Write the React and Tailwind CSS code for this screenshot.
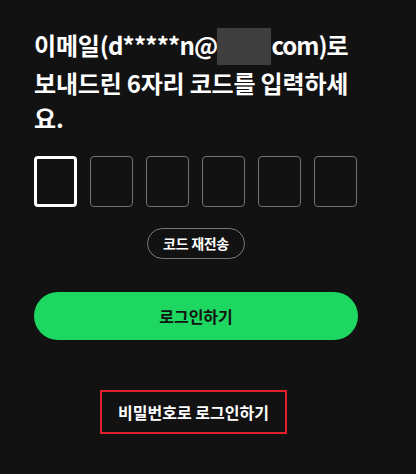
export default function App() {
  const font = { fontFamily: '"Noto Sans CJK KR", "Noto Sans", sans-serif' };
  return (
    <div className="w-[416px] h-[474px] bg-[#121212] text-white" style={font}>
      <div className="w-[324px] ml-[34px] pt-[27px] flex flex-col">
        <h1 className="text-[24px] leading-[35px] font-bold tracking-[-0.2px]">
          이메일<span className="tracking-[-0.8px]">(d*****n@</span><span className="inline-block align-middle w-[54px] h-[37px] bg-[#3e3e3e] -mt-[4px]"></span><span className="tracking-[-1px]">com)</span>로 보내드린 6자리 코드를 입력하세요.
        </h1>
        <div className="flex gap-[13px] mt-[21px]">
          <div className="w-[43px] h-[51px] rounded-[4px] border-[3px] border-white"></div>
          {[0, 1, 2, 3, 4].map((i) => (
            <div key={i} className="w-[43px] h-[51px] rounded-[4px] border border-[#727272]"></div>
          ))}
        </div>
        <div className="flex justify-center mt-[21px]">
          <button className="w-[98px] h-[31px] rounded-full border border-[#7a7a7a] text-[14px] font-bold flex items-center justify-center tracking-[-0.3px]">
            코드 재전송
          </button>
        </div>
        <button className="mt-[33px] h-[48px] w-full rounded-full bg-[#1ed760] text-[#121212] text-[16px] font-bold flex items-center justify-center">
          로그인하기
        </button>
        <div className="flex justify-center mt-[50px]">
          <button className="w-[187px] h-[44px] border-2 border-[#e0202a] text-[16px] font-bold flex items-center justify-center -ml-[5px]">
            비밀번호로 로그인하기
          </button>
        </div>
      </div>
    </div>
  );
}
